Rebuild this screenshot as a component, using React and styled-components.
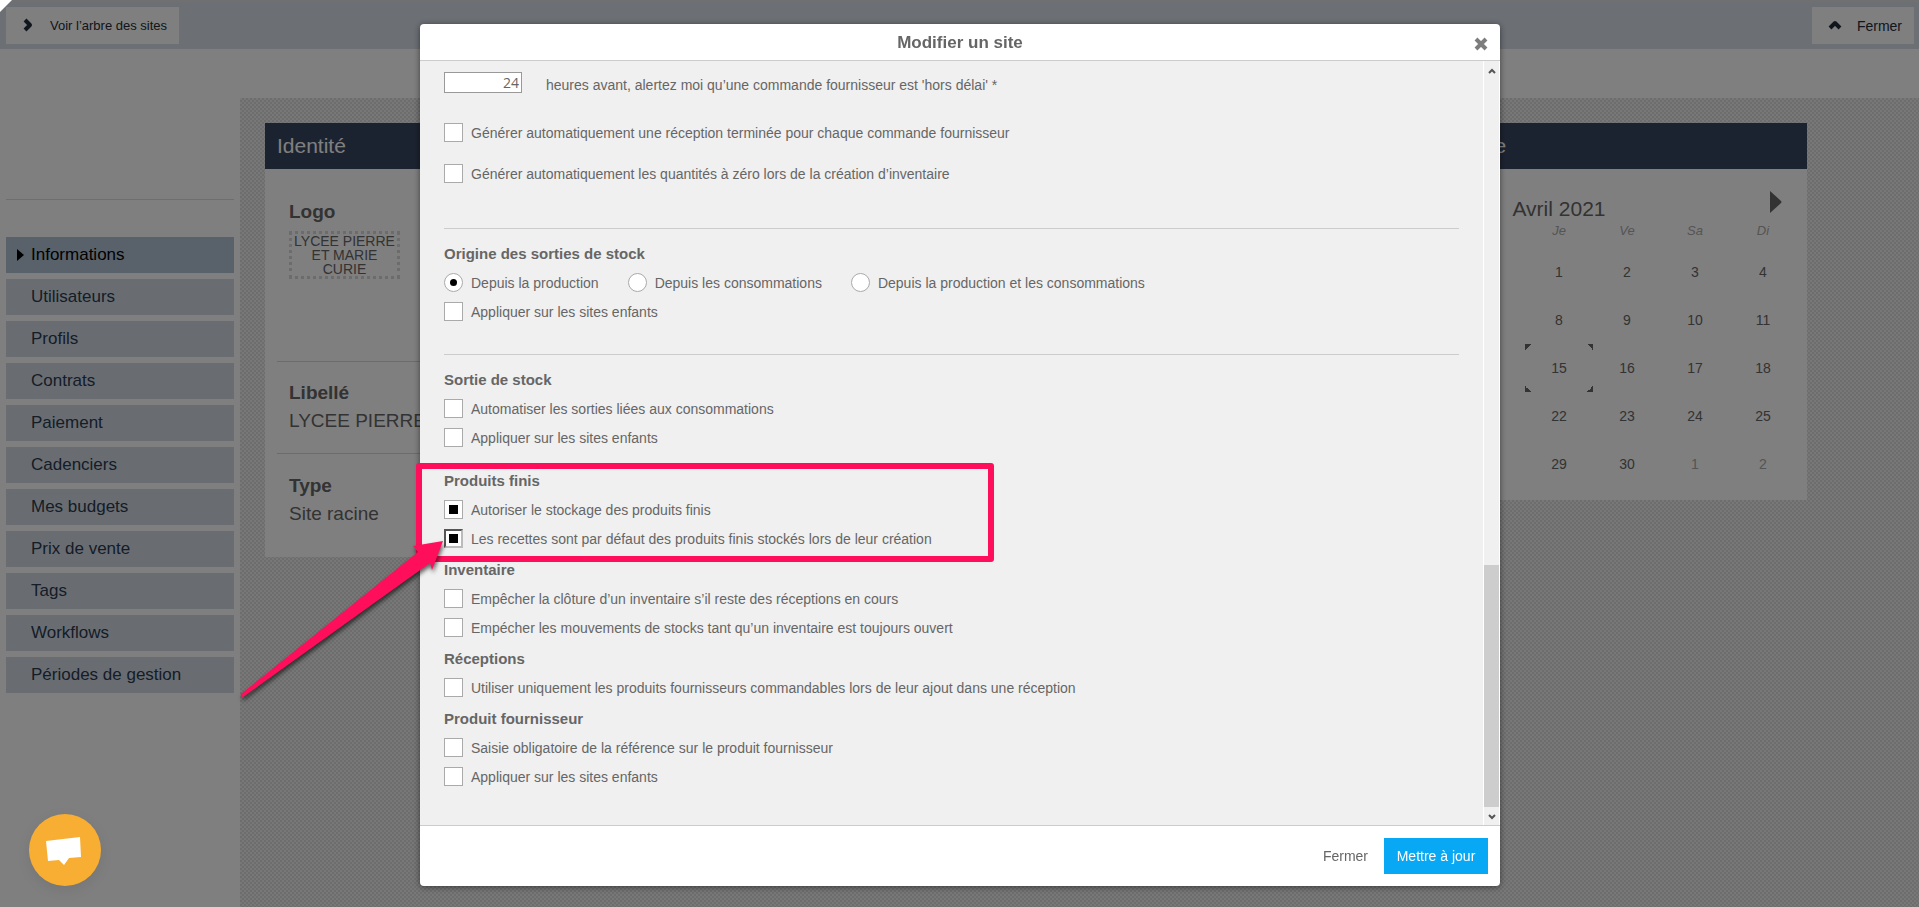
import React from "react";
import styled, { createGlobalStyle, css } from "styled-components";

const Global = createGlobalStyle`
  *, *::before, *::after { box-sizing: border-box; }
  html, body, #root { height: 100%; }
  body {
    margin: 0;
    overflow: hidden;
    background: #fff;
    color: #666;
    font: 14px/20px "Liberation Sans", Arial, sans-serif;
  }
  button, input { font-family: inherit; margin: 0; }
`;

/* ---------- page behind the dialog ---------- */

const Page = styled.div`
  min-height: 100%;
  display: flex;
  flex-direction: column;
`;

const TopBar = styled.header`
  display: flex;
  justify-content: space-between;
  align-items: flex-start;
  height: 49px;
  padding: 5px 5px 0 6px;
  border-top: 2px solid #e0e0e0;
  background: #d8dfe8;
`;

const BarButton = styled.button`
  display: flex;
  align-items: center;
  gap: ${(p) => p.$gap}px;
  height: 37px;
  padding: 0 12px 0 ${(p) => p.$left}px;
  border: 0;
  background: #fff;
  color: #222c3c;
  font-size: ${(p) => p.$size}px;
`;

const Corner = styled.div`
  position: fixed;
  z-index: 6;
  top: 0;
  left: 0;
  border-top: 12px solid #fff;
  border-right: 12px solid transparent;
`;

const Columns = styled.div`
  flex: 1;
  display: flex;
`;

const Sidebar = styled.nav`
  width: 240px;
  padding: 150px 6px 0;
`;

const MenuList = styled.ul`
  display: flex;
  flex-direction: column;
  gap: 6px;
  margin: 0;
  padding: 37px 0 0;
  border-top: 1px solid #dcdcdc;
  list-style: none;
`;

const MenuLink = styled.a`
  display: flex;
  align-items: center;
  height: 36px;
  padding: 0 11px;
  background: ${(p) => (p.$active ? "#b3c3d6" : "#d3dae5")};
  color: ${(p) => (p.$active ? "#000" : "#2a3a4f")};
  font-size: 17px;
  text-decoration: none;
  &::before {
    content: "";
    width: 0;
    margin-right: 7px;
    border: 6px solid transparent;
    border-right: 0;
    border-left: 7px solid ${(p) => (p.$active ? "#000" : "transparent")};
  }
`;

const Main = styled.main`
  flex: 1;
  display: flex;
  flex-direction: column;
`;

const TitleStrip = styled.div`
  height: 49px;
`;

const Canvas = styled.div`
  flex: 1;
  display: grid;
  grid-template-columns: repeat(3, minmax(0, 1fr));
  align-items: start;
  gap: 27px;
  padding: 25px 112px 0 25px;
  background: conic-gradient(#dadada 25%, #f0f0f0 0 50%, #dadada 0 75%, #f0f0f0 0) 0 0 / 4px 4px;
`;

const Card = styled.section`
  background: #fff;
`;

const CardTitle = styled.h2`
  margin: 0;
  padding: 0 12px;
  background: #394660;
  color: #fff;
  font-size: 21px;
  font-weight: 400;
  line-height: 46px;
`;

const Fields = styled.dl`
  margin: 0;
  padding: 0 12px 24px;
`;

const Field = styled.div`
  padding: ${(p) => p.$top}px 12px ${(p) => p.$bottom}px;
  font-size: 19px;
  line-height: 28px;
  color: #666;
  & + & { border-top: 1px solid #d8d8d8; }
  dt { font-weight: 700; }
  dd { margin: 0; white-space: nowrap; }
`;

const LogoBox = styled.span`
  display: block;
  width: 111px;
  margin-top: 5px;
  border: 3px dotted #d8d8d8;
  font-size: 14px;
  line-height: 14px;
  text-align: center;
  white-space: normal;
`;

const CalendarBody = styled.div`
  padding: 22px 10px 12px;
  color: #666;
`;

const MonthBar = styled.div`
  display: flex;
  justify-content: space-between;
  align-items: flex-start;
  height: 33px;
  padding: 0 15px;
  font-size: 21px;
  line-height: 36px;
`;

const MonthButton = styled.button`
  padding: 0;
  border: 0;
  background: none;
  line-height: 0;
`;

const Days = styled.table`
  width: 100%;
  border-collapse: collapse;
  table-layout: fixed;
  text-align: center;
  th { padding: 0 0 10px; font: italic 13px/14px "Liberation Sans", sans-serif; color: #aaa; }
  td { height: 48px; padding: 0; }
`;

const Day = styled.td`
  color: ${(p) => (p.$other ? "#aaa" : "#666")};
  ${(p) =>
    p.$today &&
    css`
      background:
        linear-gradient(135deg, #666 50%, transparent 0) 0 0,
        linear-gradient(225deg, #666 50%, transparent 0) 100% 0,
        linear-gradient(45deg, #666 50%, transparent 0) 0 100%,
        linear-gradient(315deg, #666 50%, transparent 0) 100% 100%;
      background-size: 6px 6px;
      background-repeat: no-repeat;
    `}
`;

/* ---------- dialog ---------- */

const Overlay = styled.div`
  position: fixed;
  inset: 0;
  z-index: 5;
  padding: 24px 0 24px 1px;
  background: rgba(0, 0, 0, 0.5);
`;

const Dialog = styled.div`
  position: relative;
  display: flex;
  flex-direction: column;
  width: 1080px;
  max-width: 96%;
  margin: 0 auto;
  border-radius: 4px;
  background: #fff;
  box-shadow: 0 1px 6px rgba(0, 0, 0, 0.5);
`;

const DialogHeader = styled.header`
  display: flex;
  align-items: center;
  height: 37px;
  padding: 2px 12px 0;
  border-bottom: 1px solid #ccc;
  h1 {
    flex: 1;
    margin: 0 0 0 14px;
    font-size: 17px;
    line-height: 20px;
    text-align: center;
  }
`;

const CloseButton = styled.button`
  padding: 2px 0 0;
  border: 0;
  background: none;
  line-height: 0;
`;

const DialogMain = styled.div`
  display: flex;
  border-bottom: 1px solid #ccc;
`;

const Form = styled.form`
  flex: 1;
  padding: 11px 24px 34px;
  background: #f0f0f0;
`;

const DelayRow = styled.div`
  display: flex;
  align-items: flex-start;
  gap: 24px;
  margin-bottom: 23px;
  input {
    width: 78px;
    height: 21px;
    padding: 0 2px;
    border: 1px solid #999;
    background: #fff;
    color: #666;
    font: 14px "Open Sans", sans-serif;
    text-align: right;
  }
  label { padding-top: 3px; line-height: 20px; }
`;

const Group = styled.fieldset`
  min-width: 0;
  margin: 0;
  padding: ${(p) => p.$top || 0}px 0 0;
  border: 0;
  legend {
    float: left;
    width: 100%;
    height: 31px;
    padding: 7px 0 0;
    font-size: 15px;
    font-weight: 700;
    line-height: 20px;
  }
`;

const Rule = styled.hr`
  height: 1px;
  margin: ${(p) => p.$top}px 0 8px;
  border: 0;
  background: #ccc;
`;

const Line = styled.div`
  display: flex;
  clear: both;
  gap: 29px;
  margin-bottom: ${(p) => p.$after || 0}px;
`;

const Choice = styled.label`
  display: flex;
  align-items: center;
  gap: 8px;
  height: 29px;
`;

const Box = styled.input`
  appearance: none;
  display: grid;
  place-items: center;
  width: 19px;
  height: 19px;
  border: 1px solid #aaa;
  border-radius: ${(p) => (p.type === "radio" ? "50%" : "0")};
  background: #fff;
  &:checked::before {
    content: "";
    width: ${(p) => (p.type === "radio" ? 7 : 9)}px;
    height: ${(p) => (p.type === "radio" ? 7 : 9)}px;
    border-radius: inherit;
    background: #000;
  }
  ${(p) =>
    p.$pressed &&
    css`
      border: 2px solid;
      border-color: #555 #bbb #bbb #555;
    `}
`;

const ScrollTrack = styled.div`
  display: flex;
  flex-direction: column;
  align-items: center;
  justify-content: space-between;
  width: 17px;
  border: solid #fff;
  border-width: 0 1px;
  background: #f0f0f0;
`;

const ScrollThumb = styled.div`
  width: 100%;
  height: 242px;
  margin-top: auto;
  background: #cdcdcd;
`;

const ScrollEnd = styled.span`
  height: 18px;
  padding-top: 7px;
  line-height: 0;
`;

const DialogFooter = styled.footer`
  display: flex;
  justify-content: flex-end;
  gap: 4px;
  padding: 12px;
`;

const Action = styled.button`
  height: 36px;
  padding: 0 12px;
  min-width: ${(p) => (p.$primary ? 104 : 0)}px;
  border: 0;
  background: ${(p) => (p.$primary ? "#08a8f4" : "none")};
  color: ${(p) => (p.$primary ? "#fff" : "#666")};
  font-size: 14px;
`;

/* ---------- floating pieces ---------- */

const Highlight = styled.div`
  position: absolute;
  top: 439px;
  left: -4px;
  width: 578px;
  height: 99px;
  border: 6px solid #ff0f5b;
  border-radius: 3px;
  pointer-events: none;
`;

const Arrow = styled.svg`
  position: absolute;
  top: 510px;
  left: -184px;
  overflow: visible;
  pointer-events: none;
  filter: drop-shadow(1px 3px 2px rgba(0, 0, 0, 0.6));
`;

const ChatButton = styled.button`
  position: fixed;
  z-index: 7;
  left: 29px;
  bottom: 21px;
  width: 72px;
  height: 72px;
  padding: 0;
  border: 0;
  border-radius: 50%;
  background: #f8ae32;
  box-shadow: 0 4px 14px rgba(0, 0, 0, 0.08);
`;

const MENU = [
  "Informations", "Utilisateurs", "Profils", "Contrats", "Paiement", "Cadenciers",
  "Mes budgets", "Prix de vente", "Tags", "Workflows", "Périodes de gestion",
];

const WEEKS = [
  [29, 30, 31, 1, 2, 3, 4],
  [5, 6, 7, 8, 9, 10, 11],
  [12, 13, 14, 15, 16, 17, 18],
  [19, 20, 21, 22, 23, 24, 25],
  [26, 27, 28, 29, 30, 1, 2],
];

function Check({ children, ...rest }) {
  return (
    <Choice>
      <Box type="checkbox" {...rest} />
      {children}
    </Choice>
  );
}

function Radio({ children, ...rest }) {
  return (
    <Choice>
      <Box type="radio" name="origine" {...rest} />
      {children}
    </Choice>
  );
}

function Chevron({ turn }) {
  return (
    <svg width="16" height="16" viewBox="0 0 16 16" aria-hidden="true">
      <path
        d="M4 2l5 5-5 5"
        transform={`rotate(${turn} 7 7)`}
        fill="none"
        stroke="#222c3c"
        strokeWidth="4"
        strokeLinejoin="round"
      />
    </svg>
  );
}

function ScrollArrow({ down }) {
  return (
    <svg width="8" height="7" viewBox="0 0 8 7" aria-hidden="true">
      <path d={down ? "M1 1l3 3 3-3" : "M1 5l3-3 3 3"} fill="none" stroke="#555" strokeWidth="2" />
    </svg>
  );
}

function Calendar() {
  return (
    <Card>
      <CardTitle>Calendrier de vente</CardTitle>
      <CalendarBody>
        <MonthBar>
          <MonthButton aria-label="Mois précédent">
            <svg width="12" height="22" viewBox="0 0 12 22"><path d="M12 0v22L1 12q-1-1 0-2z" fill="#666" /></svg>
          </MonthButton>
          Avril 2021
          <MonthButton aria-label="Mois suivant">
            <svg width="12" height="22" viewBox="0 0 12 22"><path d="M0 0v22l11-10q1-1 0-2z" fill="#666" /></svg>
          </MonthButton>
        </MonthBar>
        <Days>
          <thead>
            <tr>{["Lu", "Ma", "Me", "Je", "Ve", "Sa", "Di"].map((d) => <th key={d}>{d}</th>)}</tr>
          </thead>
          <tbody>
            {WEEKS.map((week, w) => (
              <tr key={w}>
                {week.map((day, i) => (
                  <Day
                    key={i}
                    $today={w === 2 && day === 15}
                    $other={(w === 0 && day > 7) || (w === 4 && day < 7)}
                  >
                    {day}
                  </Day>
                ))}
              </tr>
            ))}
          </tbody>
        </Days>
      </CalendarBody>
    </Card>
  );
}

export default function App() {
  return (
    <>
      <Global />
      <Page>
        <TopBar>
          <BarButton $gap={13} $left={15} $size={13}><Chevron turn={0} />Voir l’arbre des sites</BarButton>
          <BarButton $gap={13} $left={16} $size={14}><Chevron turn={-90} />Fermer</BarButton>
        </TopBar>
        <Columns>
          <Sidebar>
            <MenuList>
              {MENU.map((name, i) => (
                <li key={name}><MenuLink href="#" $active={i === 0}>{name}</MenuLink></li>
              ))}
            </MenuList>
          </Sidebar>
          <Main>
            <TitleStrip />
            <Canvas>
              <Card>
                <CardTitle>Identité</CardTitle>
                <Fields>
                  <Field $top={29} $bottom={82}>
                    <dt>Logo</dt>
                    <dd><LogoBox>LYCEE PIERRE ET MARIE CURIE</LogoBox></dd>
                  </Field>
                  <Field $top={17} $bottom={18}>
                    <dt>Libellé</dt>
                    <dd>LYCEE PIERRE</dd>
                  </Field>
                  <Field $top={18} $bottom={5}>
                    <dt>Type</dt>
                    <dd>Site racine</dd>
                  </Field>
                </Fields>
              </Card>
              <Card />
              <Calendar />
            </Canvas>
          </Main>
        </Columns>
      </Page>
      <Overlay>
        <Dialog role="dialog" aria-modal="true" aria-labelledby="dialog-title">
          <DialogHeader>
            <h1 id="dialog-title">Modifier un site</h1>
            <CloseButton aria-label="Fermer la fenêtre">
              <svg width="14" height="14" viewBox="0 0 14 14">
                <path d="M2 2l10 10M12 2L2 12" stroke="#7d7d7d" strokeWidth="4" />
              </svg>
            </CloseButton>
          </DialogHeader>
          <DialogMain>
            <Form>
              <DelayRow>
                <input id="delai" type="text" defaultValue="24" />
                <label htmlFor="delai">heures avant, alertez moi qu’une commande fournisseur est 'hors délai' *</label>
              </DelayRow>
              <Line $after={12}>
                <Check>Générer automatiquement une réception terminée pour chaque commande fournisseur</Check>
              </Line>
              <Line>
                <Check>Générer automatiquement les quantités à zéro lors de la création d’inventaire</Check>
              </Line>
              <Rule $top={40} />
              <Group>
                <legend>Origine des sorties de stock</legend>
                <Line>
                  <Radio defaultChecked>Depuis la production</Radio>
                  <Radio>Depuis les consommations</Radio>
                  <Radio>Depuis la production et les consommations</Radio>
                </Line>
                <Line><Check>Appliquer sur les sites enfants</Check></Line>
              </Group>
              <Rule $top={28} />
              <Group>
                <legend>Sortie de stock</legend>
                <Line><Check>Automatiser les sorties liées aux consommations</Check></Line>
                <Line><Check>Appliquer sur les sites enfants</Check></Line>
              </Group>
              <Group $top={12}>
                <legend>Produits finis</legend>
                <Line><Check defaultChecked>Autoriser le stockage des produits finis</Check></Line>
                <Line>
                  <Check defaultChecked $pressed>
                    Les recettes sont par défaut des produits finis stockés lors de leur création
                  </Check>
                </Line>
              </Group>
              <Group>
                <legend>Inventaire</legend>
                <Line><Check>Empêcher la clôture d’un inventaire s’il reste des réceptions en cours</Check></Line>
                <Line><Check>Empécher les mouvements de stocks tant qu’un inventaire est toujours ouvert</Check></Line>
              </Group>
              <Group>
                <legend>Réceptions</legend>
                <Line>
                  <Check>Utiliser uniquement les produits fournisseurs commandables lors de leur ajout dans une réception</Check>
                </Line>
              </Group>
              <Group>
                <legend>Produit fournisseur</legend>
                <Line><Check>Saisie obligatoire de la référence sur le produit fournisseur</Check></Line>
                <Line><Check>Appliquer sur les sites enfants</Check></Line>
              </Group>
            </Form>
            <ScrollTrack aria-hidden="true">
              <ScrollEnd><ScrollArrow /></ScrollEnd>
              <ScrollThumb />
              <ScrollEnd><ScrollArrow down /></ScrollEnd>
            </ScrollTrack>
          </DialogMain>
          <DialogFooter>
            <Action type="button">Fermer</Action>
            <Action type="button" $primary>Mettre à jour</Action>
          </DialogFooter>
          <Highlight />
          <Arrow width="210" height="164" viewBox="0 0 210 164" aria-hidden="true">
            <path d="M5 160Q4 162 7 163L194 29L196 36L207 7L177 12L182 18Z" fill="#ff0f5b" />
          </Arrow>
        </Dialog>
      </Overlay>
      <Corner />
      <ChatButton aria-label="Ouvrir la messagerie">
        <svg width="72" height="72" viewBox="0 0 72 72">
          <path d="M17 27l34-4 1 20-12 1-5 7-5-5-11 1z" fill="#fff" />
        </svg>
      </ChatButton>
    </>
  );
}
